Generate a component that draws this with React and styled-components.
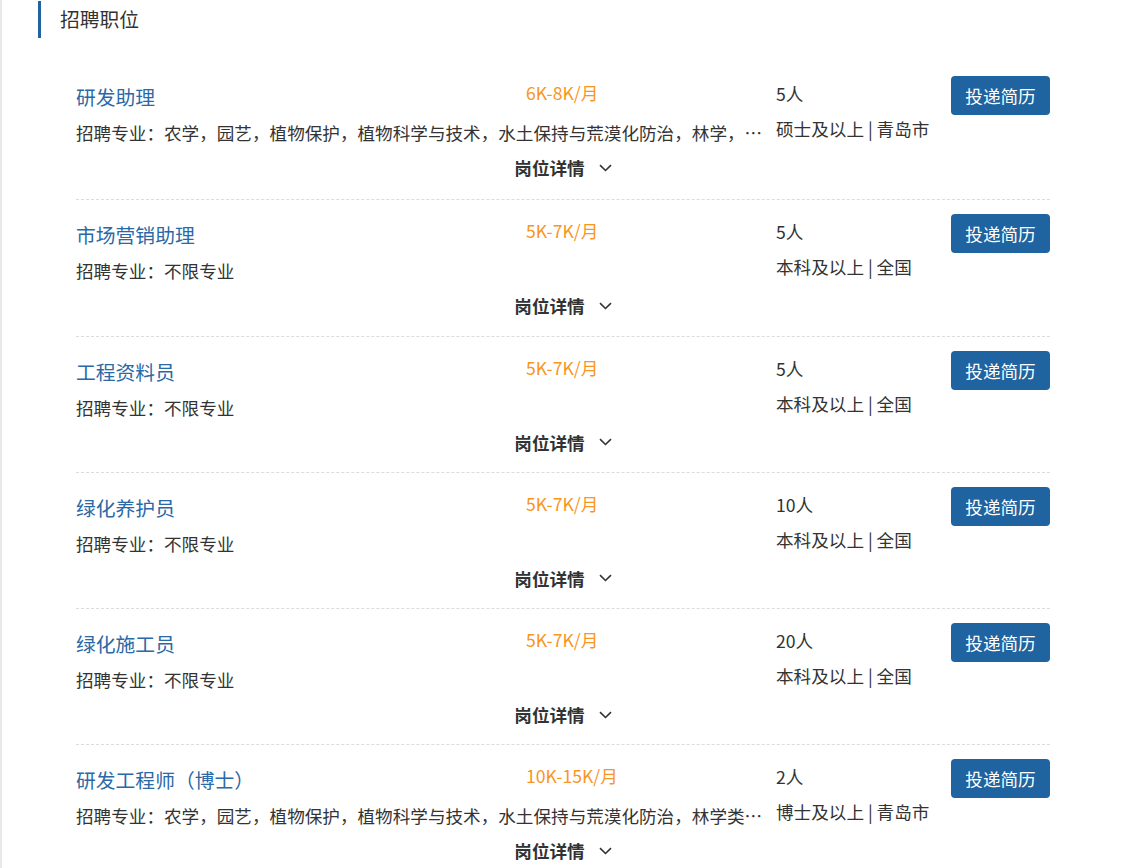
import React from "react";
import styled, { createGlobalStyle } from "styled-components";

const GlobalStyle = createGlobalStyle`
  body {
    margin: 0;
    background: #fff;
    font-family: "Noto Sans CJK SC", "Noto Sans", sans-serif;
    color: #333;
  }
`;

const Page = styled.div`
  min-height: 100vh;
  border-left: 2px solid #e8e8e8;
  box-sizing: border-box;
`;

const Header = styled.div`
  display: flex;
  align-items: center;
  height: 38px;
  padding-left: 36px;
`;

const Bar = styled.span`
  width: 3px;
  height: 37px;
  margin-top: 1px;
  background: #1f64a0;
`;

const HeaderTitle = styled.h2`
  margin: 0 0 0 19px;
  font-size: 19.8px;
  font-weight: normal;
  line-height: 38px;
  color: #333;
`;

const List = styled.div`
  margin-top: 24px;
  padding: 0 75px 0 74px;
`;

const Row = styled.div`
  padding: 14px 0 14px;
  border-bottom: 1px dashed #dcdcdc;

  &:first-child {
    padding-bottom: 16px;
  }
`;

const Main = styled.div`
  display: flex;
  align-items: flex-start;
`;

const Left = styled.div`
  width: 690px;
  margin-right: 10px;
`;

const TopLine = styled.div`
  display: flex;
  align-items: flex-start;
`;

const Title = styled.div`
  width: 450px;
  margin-top: 4px;
  font-size: 19.8px;
  line-height: 34px;
  color: #2a69a6;
`;

const Salary = styled.div`
  font-size: 17.6px;
  line-height: 34px;
  color: #f8961e;
`;

const Major = styled.div`
  font-size: 17.6px;
  line-height: 38px;
  white-space: nowrap;
  overflow: hidden;
  text-overflow: ellipsis;
`;

const Info = styled.div`
  width: 175px;
  font-size: 17.6px;
`;

const Count = styled.div`
  line-height: 36px;
`;

const Degree = styled.div`
  line-height: 34px;
  white-space: nowrap;
`;

const ApplyButton = styled.button`
  width: 99px;
  height: 39px;
  border: none;
  border-radius: 4px;
  background: #1f64a0;
  color: #fff;
  font-family: inherit;
  font-size: 17.6px;
  cursor: pointer;
`;

const Toggle = styled.div`
  display: flex;
  justify-content: center;
  align-items: center;
  gap: 14px;
  height: 31.25px;
  font-size: 17.6px;
  font-weight: bold;
  color: #333;
  cursor: pointer;
`;

const Chevron = () => (
  <svg width="13" height="8" viewBox="0 0 13 8" fill="none">
    <path d="M1 1.2 L6.5 6.5 L12 1.2" stroke="#333" strokeWidth="1.6" />
  </svg>
);

const longMajor =
  "农学，园艺，植物保护，植物科学与技术，水土保持与荒漠化防治，林学，森林保护，园林，风景园林";

const jobs = [
  { title: "研发助理", salary: "6K-8K/月", major: longMajor, count: "5人", degree: "硕士及以上", city: "青岛市" },
  { title: "市场营销助理", salary: "5K-7K/月", major: "不限专业", count: "5人", degree: "本科及以上", city: "全国" },
  { title: "工程资料员", salary: "5K-7K/月", major: "不限专业", count: "5人", degree: "本科及以上", city: "全国" },
  { title: "绿化养护员", salary: "5K-7K/月", major: "不限专业", count: "10人", degree: "本科及以上", city: "全国" },
  { title: "绿化施工员", salary: "5K-7K/月", major: "不限专业", count: "20人", degree: "本科及以上", city: "全国" },
  {
    title: "研发工程师（博士）",
    salary: "10K-15K/月",
    major: "农学，园艺，植物保护，植物科学与技术，水土保持与荒漠化防治，林学类，生态学",
    count: "2人",
    degree: "博士及以上",
    city: "青岛市",
  },
];

const JobRow = ({ job }) => (
  <Row>
    <Main>
      <Left>
        <TopLine>
          <Title>{job.title}</Title>
          <Salary>{job.salary}</Salary>
        </TopLine>
        <Major>招聘专业：{job.major}</Major>
      </Left>
      <Info>
        <Count>{job.count}</Count>
        <Degree>{`${job.degree} | ${job.city}`}</Degree>
      </Info>
      <ApplyButton>投递简历</ApplyButton>
    </Main>
    <Toggle>
      <span>岗位详情</span>
      <Chevron />
    </Toggle>
  </Row>
);

const App = () => (
  <Page>
    <GlobalStyle />
    <Header>
      <Bar />
      <HeaderTitle>招聘职位</HeaderTitle>
    </Header>
    <List>
      {jobs.map((job) => (
        <JobRow key={job.title} job={job} />
      ))}
    </List>
  </Page>
);

export default App;
